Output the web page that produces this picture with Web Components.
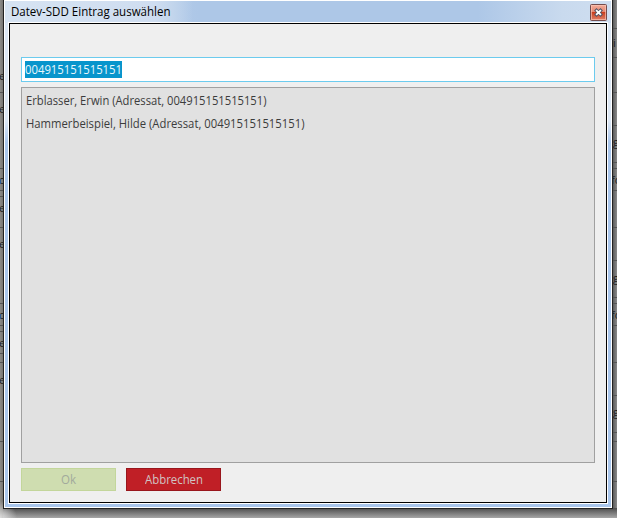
<!DOCTYPE html>
<html lang="de"><head><meta charset="utf-8"><title>Datev-SDD Eintrag auswählen</title>
<style>html,body{margin:0;width:617px;height:518px;overflow:hidden;font-family:"Open Sans","Noto Sans",sans-serif;font-size:12px}</style></head>
<body><entry-desktop>
<entry-dialog><fit-text slot="title" width="159.5">Datev-SDD Eintrag auswählen</fit-text>
<search-field value="004915151515151"></search-field>
<entry-list><list-row><fit-text width="240.5">Erblasser, Erwin (Adressat, 004915151515151)</fit-text></list-row><list-row><fit-text width="278.5">Hammerbeispiel, Hilde (Adressat, 004915151515151)</fit-text></list-row></entry-list>
<action-button slot="actions" kind="ok"><fit-text width="15">Ok</fit-text></action-button>
<action-button slot="actions" kind="cancel"><fit-text width="58">Abbrechen</fit-text></action-button>
</entry-dialog></entry-desktop>
<script>
class Base extends HTMLElement{
  constructor(){super();this.attachShadow({mode:'open'}).innerHTML=this.render()}
  render(){return ''}
}
customElements.define('entry-desktop',class extends Base{
  render(){
    const L=[92,168,190,196,227,303,325,331,353,362,441,481];
    const R=[28,57,92,125,162,168,190,227,260,297,303,325,362,395,432,441,481];
    const lt=[[80,'e'],[113,'e'],[184,'o'],[212,'e'],[248,'e'],[319,'o'],[347,'e'],[384,'e']];
    const rt=[[47,'i'],[146,'g'],[184,'fo'],[282,'g'],[319,'fo'],[416,'g']];
    return `<style>:host{display:block;position:relative;box-sizing:border-box;width:617px;height:518px;padding:0 4px 9px 3px;background:#777}
    svg{position:absolute;inset:0}::slotted(*){position:relative}</style>
    <svg width="617" height="518"><defs>
    <linearGradient id="l"><stop stop-color="#8c8b88"/><stop offset="1" stop-color="#6f6e6b"/></linearGradient>
    <linearGradient id="r"><stop stop-color="#505050"/><stop offset="1" stop-color="#8a8a8a"/></linearGradient>
    <linearGradient id="b" x2="0" y2="1"><stop stop-color="#4c4c4c"/><stop offset="1" stop-color="#a6a6a6"/></linearGradient>
    <radialGradient id="c" gradientUnits="userSpaceOnUse" cx="0" cy="518" r="17"><stop stop-color="#ddd"/><stop offset="1" stop-color="#ddd" stop-opacity="0"/></radialGradient></defs>
    <rect width="4" height="518" fill="url(#l)"/><rect x="612" width="5" height="518" fill="url(#r)"/>
    <g fill="#555">${L.map(y=>`<rect y="${y}" width="3" height="1"/>`).join('')}${R.map(y=>`<rect x="613" y="${y}" width="4" height="1"/>`).join('')}</g>
    <g font-family="Open Sans" font-size="11" fill="#1b1b20">${lt.map(([y,t])=>`<text x="-1" y="${y}">${t}</text>`).join('')}${rt.map(([y,t])=>`<text x="${t==='fo'?611:613}" y="${y}">${t}</text>`).join('')}</g>
    <rect y="314" width="1" height="5" fill="#2f5b94"/><rect y="179" width="1" height="5" fill="#2f5b94"/>
    <rect x="3" y="508" width="614" height="10" fill="url(#b)"/><rect y="500" width="20" height="18" fill="url(#c)"/></svg><slot></slot>`}
});
customElements.define('close-button',class extends Base{
  render(){return `<style>:host{display:block;width:17px;height:17px}svg{display:block}</style>
  <svg width="17" height="17"><defs><linearGradient id="g" x2="0" y2="1"><stop stop-color="#f3ad9b"/><stop offset=".48" stop-color="#e58670"/><stop offset=".5" stop-color="#c93f20"/><stop offset="1" stop-color="#e2846b"/></linearGradient></defs>
  <rect x=".5" y=".5" width="16" height="16" rx="1" fill="url(#g)" stroke="#744c4c"/><rect x="1.5" y="1.5" width="14" height="14" fill="none" stroke="#fbc8b8" stroke-opacity=".65"/>
  <path d="M6.5 6.5L10.5 10.5M10.5 6.5L6.5 10.5" stroke="#535666" stroke-width="3.4" stroke-linecap="square"/><path d="M6.1 6.1L10.9 10.9M10.9 6.1L6.1 10.9" stroke="#fff" stroke-width="1.8"/></svg>`}
});
customElements.define('entry-dialog',class extends Base{
  render(){return `<style>
  :host{display:flex;flex-direction:column;box-sizing:border-box;width:610px;height:509px;border:solid #222;border-width:0 1px 1px;color:#000}
  .glass{flex:1;display:flex;flex-direction:column;border:1px solid #fff;padding:0 3px 3px;
   background:linear-gradient(90deg,#d6e3f2 0,#cfddf0 150px,#c2d5ec 168px,#afc8e700 188px) 0 0/200px 22px no-repeat,
   linear-gradient(90deg,#d3e0f1,#adc7e7 32%,#adc7e7 78%,#c9daee 92%,#cfdef0) 0 0/100% 22px no-repeat,
   linear-gradient(#dce7f4 0 120px,#a9c6ec 142px)}
  header{height:21px;display:flex;justify-content:space-between;box-sizing:border-box;padding:3px 1px 0 3px}
  .title{line-height:16px;font-size:12px}
  .white{flex:1;display:flex;border:1px solid #fff}
  main{flex:1;box-sizing:border-box;border:1px solid #000;background:#efefef;padding:33px 11px 11px;display:flex;flex-direction:column;gap:5px}
  footer{display:flex;gap:10px}</style>
  <div class="glass"><header><div class="title"><slot name="title"></slot></div><close-button></close-button></header>
  <div class="white"><main><slot></slot><footer><slot name="actions"></slot></footer></main></div></div>`}
});
customElements.define('search-field',class extends Base{
  render(){return `<style>:host{display:flex;align-items:center;box-sizing:border-box;height:25px;border:1px solid #6ccbee;background:#fff;padding-left:3px}
  div{background:#0795cc;color:#e9f7fc;height:17px;line-height:17px;font-size:12px;width:97px}</style><div><fit-text width="97">${this.getAttribute('value')}</fit-text></div>`}
});
customElements.define('entry-list',class extends Base{
  render(){return `<style>:host{flex:1;display:block;box-sizing:border-box;border:1px solid #a0a0a0;background:#e1e1e1;padding:1px 4px;color:#3c3c3c}</style><slot></slot>`}
});
customElements.define('list-row',class extends Base{
  render(){return `<style>:host{display:block;height:23px;line-height:23px;font-size:12px}</style><slot></slot>`}
});
customElements.define('action-button',class extends Base{
  render(){const ok=this.getAttribute('kind')==='ok';
  return `<style>:host{display:flex;align-items:center;justify-content:center;box-sizing:border-box;width:95px;height:23px;font-size:12px;line-height:21px;
  ${ok?'background:#cfddb0;border:1px solid #c3d69b;color:#a2aa9c':'background:#c01f26;border:1px solid #98161c;color:#d0c4c4'}}</style><slot></slot>`}
});
// Single-line label condensed to its nominal width; defined last, so that it measures inherited styles.
customElements.define('fit-text',class extends Base{
  render(){return `<style>:host{display:inline-block;white-space:pre;vertical-align:top}span{display:inline-block;transform-origin:0 50%}</style><span><slot></slot></span>`}
  connectedCallback(){
    const s=this.shadowRoot.querySelector('span'),w=+this.getAttribute('width');
    const m=s.getBoundingClientRect().width;
    this.style.width=w+'px';
    s.style.transform=`scaleX(${w/m})`;
  }
});
</script></body></html>
